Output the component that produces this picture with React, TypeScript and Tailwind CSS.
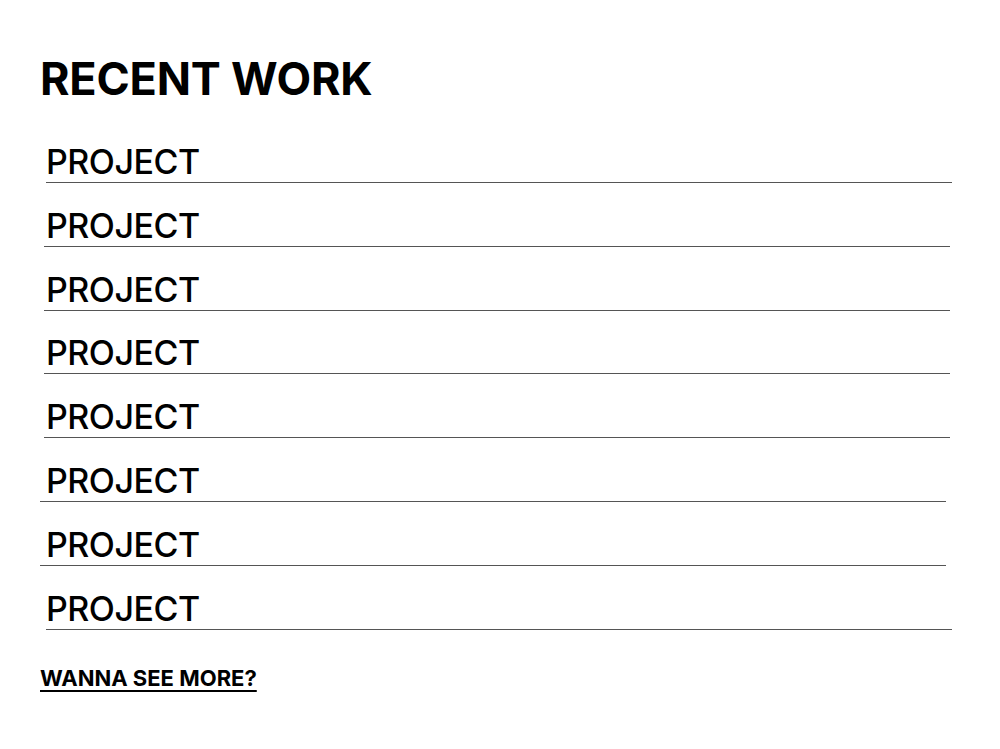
import React from "react";

const rows: { id: number; ruleClass: string }[] = [
  { id: 1, ruleClass: "ml-[6px]" },
  { id: 2, ruleClass: "ml-[4px]" },
  { id: 3, ruleClass: "ml-[4px]" },
  { id: 4, ruleClass: "ml-[4px]" },
  { id: 5, ruleClass: "ml-[4px]" },
  { id: 6, ruleClass: "ml-0" },
  { id: 7, ruleClass: "ml-0" },
  { id: 8, ruleClass: "ml-[6px]" },
];

export default function App() {
  return (
    <div
      className="min-h-[749px] w-[1000px] bg-white text-black"
      style={{ fontFamily: "Inter, 'Noto Sans', sans-serif" }}
    >
      <div className="pl-[40px] pt-[57px]">
        <h1 className="text-[45px] font-bold leading-[44px] tracking-[-0.2px]">RECENT WORK</h1>
        <ul className="mt-[41px] flex flex-col gap-[22.8px]">
          {rows.map((r) => (
            <li key={r.id} className="flex flex-col">
              <a className="pl-[6px] text-[34px] font-medium leading-[40px] tracking-[-0.5px]">PROJECT</a>
              <div className={`h-px w-[906px] bg-[#555] ${r.ruleClass}`} />
            </li>
          ))}
        </ul>
        <a className="mt-[36px] inline-block text-[22px] font-bold leading-[24px] underline decoration-2 underline-offset-[4px]">
          WANNA SEE MORE?
        </a>
      </div>
    </div>
  );
}
